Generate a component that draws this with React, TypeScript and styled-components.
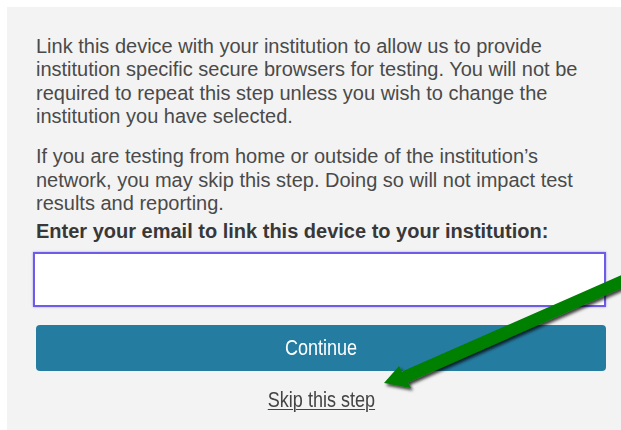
import React from 'react';
import styled, { createGlobalStyle } from 'styled-components';

const GlobalStyle = createGlobalStyle`
  html, body {
    margin: 0;
    padding: 0;
    background: #ffffff;
  }
  body {
    font-family: 'Liberation Sans', Arial, sans-serif;
    overflow: hidden;
  }
`;

const Page = styled.div`
  position: relative;
  width: 621px;
  height: 430px;
  overflow: hidden;
`;

const Panel = styled.section`
  margin: 7px 0 0 7px;
  height: 423px;
  box-sizing: border-box;
  background: #f3f3f3;
  padding: 28px 15px 0 29px;
  display: flex;
  flex-direction: column;
`;

const Copy = styled.p`
  margin: 0 0 16.5px;
  font-size: 20px;
  line-height: 23.4px;
  color: #4a4a4a;
`;

const Label = styled.label`
  display: block;
  margin: -11.5px 0 8px;
  font-size: 20px;
  line-height: 23.4px;
  font-weight: bold;
  color: #383838;
`;

const EmailInput = styled.input`
  margin-left: -3px;
  height: 55px;
  box-sizing: border-box;
  border: 2px solid #6d5ce6;
  box-shadow: 0 0 2px rgba(109, 92, 230, 0.6);
  background: #ffffff;
  outline: none;
  font-size: 20px;
  padding: 0 10px;
`;

const ContinueButton = styled.button`
  margin-top: 18px;
  height: 46px;
  border: none;
  border-radius: 4px;
  background: #247ca1;
  color: #ffffff;
  font-family: 'Liberation Sans', Arial, sans-serif;
  font-size: 22px;
`;

const SkipLink = styled.a`
  align-self: center;
  margin-top: 16px;
  font-family: 'Liberation Sans', Arial, sans-serif;
  font-size: 22px;
  line-height: 25px;
  color: #444444;
`;

// no narrow face installed, so squeeze the regular one
const Narrow = styled.span<{ $underline?: boolean }>`
  display: inline-block;
  transform: scaleX(0.82);
  text-decoration: ${p => (p.$underline ? 'underline' : 'none')};
  text-decoration-thickness: 1px;
  text-underline-offset: 2px;
`;

const Pointer = styled.svg`
  position: absolute;
  top: 0;
  left: 0;
  pointer-events: none;
`;

// green call-out arrow pointing at the skip link
const Arrow = () => (
  <Pointer width="621" height="430" viewBox="0 0 621 430">
    <defs>
      <filter id="arrowShadow" x="-10%" y="-20%" width="130%" height="150%">
        <feDropShadow dx="2" dy="2.5" stdDeviation="1.6" floodColor="#000" floodOpacity="0.75" />
      </filter>
    </defs>
    <polygon
      points="384,383 399,366 402,371.5 640,267 640,280 408,382.5 411,388"
      fill="#008000"
      filter="url(#arrowShadow)"
    />
  </Pointer>
);

export default function App() {
  return (
    <Page>
      <GlobalStyle />
      <Panel>
        <Copy>
          Link this device with your institution to allow us to provide institution specific
          secure browsers for testing. You will not be required to repeat this step unless you
          wish to change the institution you have selected.
        </Copy>
        <Copy>
          If you are testing from home or outside of the institution’s network, you may skip
          this step. Doing so will not impact test results and reporting.
        </Copy>
        <Label htmlFor="email">Enter your email to link this device to your institution:</Label>
        <EmailInput id="email" type="email" />
        <ContinueButton type="button">
          <Narrow>Continue</Narrow>
        </ContinueButton>
        <SkipLink href="#">
          <Narrow $underline>Skip this step</Narrow>
        </SkipLink>
      </Panel>
      <Arrow />
    </Page>
  );
}
